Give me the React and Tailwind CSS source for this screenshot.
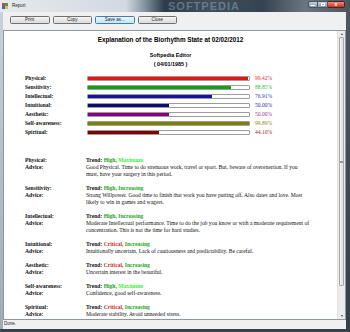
import React from 'react'

const bars = [
  { name: 'Physical:', value: 99.42, fill: '#e81414', text: 'text-[#e03030]' },
  { name: 'Sensitivity:', value: 88.85, fill: '#12a012', text: 'text-[#38b838]' },
  { name: 'Intellectual:', value: 76.91, fill: '#1414a0', text: 'text-[#3838c0]' },
  { name: 'Intuitional:', value: 50.0, fill: '#0a0a80', text: 'text-[#2c2cb0]' },
  { name: 'Aesthetic:', value: 50.0, fill: '#860086', text: 'text-[#a030a0]' },
  { name: 'Self-awareness:', value: 99.89, fill: '#7e7e00', text: 'text-[#8c8c10]' },
  { name: 'Spiritual:', value: 44.1, fill: '#800000', text: 'text-[#a02828]' }
]

const details = [
  {
    name: 'Physical:',
    trend: [['High,', 'text-[#18a018]'], ['Maximum', 'text-[#3cf03c]']],
    advice: ['Good Physical. Time to do strenuous work, travel or sport. But, beware of overexertion. If you', 'must, have your surgery in this period.']
  },
  {
    name: 'Sensitivity:',
    trend: [['High,', 'text-[#18a018]'], ['Increasing', 'text-[#20a820]']],
    advice: ['Strong Willpower. Good time to finish that work you have putting off. Also dates and love. Most', 'likely to win in games and wagers.']
  },
  {
    name: 'Intellectual:',
    trend: [['High,', 'text-[#18a018]'], ['Increasing', 'text-[#20a820]']],
    advice: ['Moderate Intellectual performance. Time to do the job you know or with a moderate requirement of', 'concentration. This is not the time for hard studies.']
  },
  {
    name: 'Intuitional:',
    trend: [['Critical,', 'text-[#d02c2c]'], ['Increasing', 'text-[#20a820]']],
    advice: ['Intuitionally uncertain. Lack of cautiousness and predictability. Be careful.']
  },
  {
    name: 'Aesthetic:',
    trend: [['Critical,', 'text-[#d02c2c]'], ['Increasing', 'text-[#20a820]']],
    advice: ['Uncertain interest in the beautiful.']
  },
  {
    name: 'Self-awareness:',
    trend: [['High,', 'text-[#18a018]'], ['Maximum', 'text-[#3cf03c]']],
    advice: ['Confidence, good self-awareness.']
  },
  {
    name: 'Spiritual:',
    trend: [['Critical,', 'text-[#d02c2c]'], ['Increasing', 'text-[#20a820]']],
    advice: ['Moderate stability. Avoid unneeded stress.']
  }
]

const buttons = ['Print', 'Copy', 'Save as...', 'Close']

function TitleBar() {
  return (
    <div className="relative h-[12px] flex items-center bg-[linear-gradient(90deg,#e6eaee_0%,#d2d9df_36%,#8a98a4_41%,#2c3c4a_47%,#3e5060_60%,#34434f_75%,#6c767e_87%,#4a545c_100%)]">
      <svg width="6" height="6" viewBox="0 0 6 6" className="ml-[2px]">
        <rect x="0" y="0" width="3" height="3" fill="#d84040" />
        <rect x="3" y="0" width="3" height="3" fill="#40a040" />
        <rect x="0" y="3" width="3" height="3" fill="#4060d0" />
        <rect x="3" y="3" width="3" height="3" fill="#e0c040" />
      </svg>
      <span className="ml-[4px] text-[4.5px] leading-none text-[#222]">Report</span>
      <span className="absolute left-[168px] top-[0px] text-[11px] leading-[12px] font-bold tracking-[1px] text-[#c8d2dc]/35">SOFTPEDIA</span>
      {/* caption buttons */}
      <div className="absolute right-[5px] top-[1px] flex">
        <div className="w-[10px] h-[7px] rounded-l-[2px] border border-[#4a5560] bg-[linear-gradient(180deg,#c8d0d8,#8a96a2)] flex items-end justify-center pb-[1px]">
          <div className="w-[4px] h-[1px] bg-white" />
        </div>
        <div className="w-[10px] h-[7px] border border-l-0 border-[#4a5560] bg-[linear-gradient(180deg,#c8d0d8,#8a96a2)] flex items-center justify-center">
          <div className="w-[4px] h-[3px] border border-white" />
        </div>
        <div className="w-[17px] h-[7px] rounded-r-[2px] border border-l-0 border-[#5a2020] bg-[linear-gradient(180deg,#e89080,#c83020)] flex items-center justify-center">
          <span className="text-[5px] leading-none font-bold text-white">x</span>
        </div>
      </div>
    </div>
  )
}

function Scrollbar() {
  return (
    <div className="w-[8px] flex flex-col bg-[#ececec] border-l border-[#e2e2e2]">
      <div className="h-[6px] flex items-center justify-center">
        <div className="w-0 h-0 border-l-[1.5px] border-r-[1.5px] border-b-[2px] border-l-transparent border-r-transparent border-b-[#404040]" />
      </div>
      <div className="h-[249px] mx-[1px] rounded-[1px] border border-[#a8a8a8] bg-[linear-gradient(90deg,#f4f4f4,#dedede)] flex items-center justify-center">
        <div className="w-[3px] h-[2px] border-y border-[#9a9a9a]" />
      </div>
      <div className="flex-1" />
      <div className="h-[6px] flex items-center justify-center">
        <div className="w-0 h-0 border-l-[1.5px] border-r-[1.5px] border-t-[2px] border-l-transparent border-r-transparent border-t-[#404040]" />
      </div>
    </div>
  )
}

export default function App() {
  return (
    <div className="w-[350px] h-[332px] flex flex-col overflow-hidden bg-[#3c4954] font-['Liberation_Sans',Arial,sans-serif]">
      <TitleBar />
      <div className="flex-1 flex min-h-0">
        <div className="w-[3px] bg-[linear-gradient(180deg,#c9d1d8,#9eabb6)]" />
        <div className="flex-1 flex flex-col min-w-0">
          {/* toolbar */}
          <div className="h-[18px] bg-[#f0f0f0] flex items-start pt-[3.5px] pl-[7px] gap-[3px]">
            {buttons.map((b) => (
              <div
                key={b}
                className={
                  b === 'Save as...'
                    ? 'w-[39.5px] h-[8.5px] rounded-[1.5px] border border-[#3c7fb1] bg-[linear-gradient(180deg,#eaf6fd,#c4e5f6)] flex items-center justify-center text-[4.5px] leading-none text-[#222]'
                    : 'w-[39.5px] h-[8.5px] rounded-[1.5px] border border-[#707070] bg-[linear-gradient(180deg,#f4f4f4,#dcdcdc)] flex items-center justify-center text-[4.5px] leading-none text-[#222]'
                }
              >
                {b}
              </div>
            ))}
          </div>

          {/* report */}
          <div className="flex-1 flex min-h-0 border border-[#8c98a4] bg-white">
            <div className="flex-1 min-w-0 overflow-hidden">
              <div className="pt-[5px] text-center text-black">
                <div className="text-[6.3px] leading-[8px] font-bold">Explanation of the Biorhythm State at 02/02/2012</div>
                <div className="mt-[7px] text-[5.4px] leading-[8.5px] font-bold">Softpedia Editor</div>
                <div className="text-[5.4px] leading-[8.5px] font-bold">( 04/01/1985 )</div>
              </div>

              <div className="mt-[6px] pl-[21px] font-['Liberation_Serif','Times_New_Roman',serif]">
                {bars.map((b) => (
                  <div key={b.name} className="h-[9px] flex items-center">
                    <div className="w-[62px] text-[5.5px] leading-none font-bold text-[#111]">{b.name}</div>
                    <div className="w-[163px] h-[5.5px] rounded-[1px] border border-[#9c9c9c] bg-white">
                      <div className="h-full" style={{ width: b.value + '%', backgroundColor: b.fill }} />
                    </div>
                    <div className={'ml-[5px] text-[5.5px] leading-none ' + b.text}>{b.value.toFixed(2)}%</div>
                  </div>
                ))}
              </div>

              <div className="mt-[19.5px] pl-[21px] font-['Liberation_Serif','Times_New_Roman',serif] text-[5.6px] leading-[7px] text-[#111]">
                {details.map((d, i) => (
                  <div key={d.name} className={i > 0 ? 'mt-[7px] flex' : 'flex'}>
                    <div className="w-[61px] font-bold">
                      <div>{d.name}</div>
                      <div>Advice:</div>
                    </div>
                    <div className="whitespace-nowrap">
                      <div className="font-bold">
                        Trend: <span className={d.trend[0][1]}>{d.trend[0][0]}</span>{' '}
                        <span className={d.trend[1][1]}>{d.trend[1][0]}</span>
                      </div>
                      {d.advice.map((line) => (
                        <div key={line}>{line}</div>
                      ))}
                    </div>
                  </div>
                ))}
              </div>
            </div>
            <Scrollbar />
          </div>

          {/* status bar */}
          <div className="h-[9px] bg-[#f0f0f0] flex items-center pl-[1px] text-[4.5px] leading-none text-[#222]">Done.</div>
        </div>
        <div className="w-[4px] bg-[linear-gradient(180deg,#4a5864,#34404a)]" />
      </div>
      <div className="h-[3px] bg-[#36424c]" />
    </div>
  )
}
